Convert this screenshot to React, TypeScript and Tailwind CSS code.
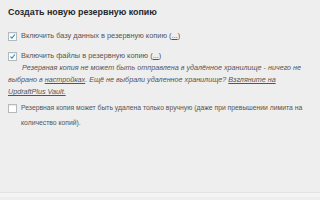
import React from 'react';

function Box({ checked }: { checked?: boolean }) {
  return (
    <span className="mt-[1px] flex h-[9px] w-[9px] shrink-0 items-center justify-center border border-[#b4b9be] bg-white shadow-[inset_0_1px_1px_rgba(0,0,0,0.08)]">
      {checked && (
        <svg viewBox="0 0 10 10" className="h-[9px] w-[9px]">
          <path d="M2 5.2 L4.2 7.4 L8.4 2.2" fill="none" stroke="#1e8cbe" strokeWidth="1.5" />
        </svg>
      )}
    </span>
  );
}

export default function App() {
  return (
    <div className="flex h-[200px] w-[320px] flex-col overflow-hidden bg-[#eeeeee] font-['Liberation_Sans',Arial,sans-serif] text-[#555]">
      <div className="px-[8px] pt-[6px]">
        <h2 className="text-[8.9px] font-bold leading-[12px] text-[#23282d]">Создать новую резервную копию</h2>

        <label className="mt-[13px] flex items-start gap-[4px] text-[7.4px] leading-[10px]">
          <Box checked />
          <span>
            Включить базу данных в резервную копию (<span className="underline">...</span>)
          </span>
        </label>

        <label className="mt-[10px] flex items-start gap-[4px] text-[7.4px] leading-[10px]">
          <Box checked />
          <span>
            Включить файлы в резервную копию (<span className="underline">...</span>)
          </span>
        </label>

        <p className="mt-[1px] indent-[14px] text-[7.2px] italic leading-[12px] text-[#555]">
          Резервная копия не может быть отправлена в удалённое хранилище - ничего не выбрано в{' '}
          <span className="underline">настройках</span>. Ещё не выбрали удаленное хранилище?{' '}
          <span className="underline">Взгляните на UpdraftPlus Vault.</span>
        </p>

        <label className="mt-[2px] flex items-start gap-[4px] text-[6.8px] leading-[15px]">
          <span className="mt-[3px]">
            <Box />
          </span>
          <span className="w-[290px]">
            Резервная копия может быть удалена только вручную (даже при превышении лимита на количество копий).
          </span>
        </label>
      </div>

      <div className="mt-auto mb-[3px] h-[5px] border-t border-[#e2e2e2] bg-[#f4f4f4]" />
    </div>
  );
}
